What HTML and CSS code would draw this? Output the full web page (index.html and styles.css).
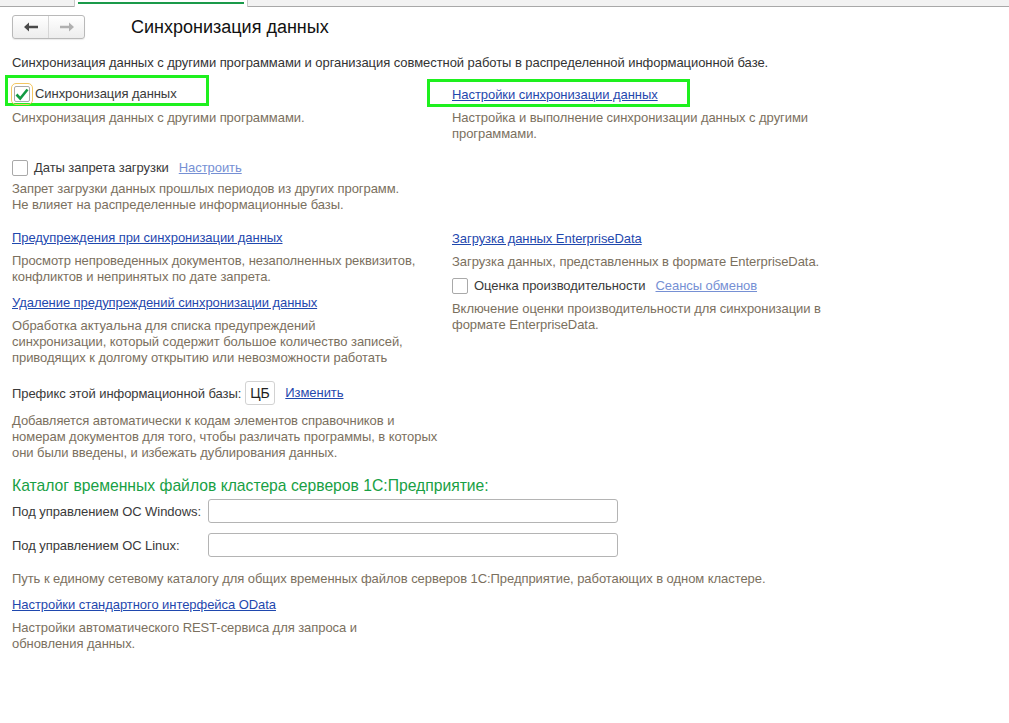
FILE: index.html
```html
<!DOCTYPE html>
<html lang="ru">
<head>
    <meta charset="UTF-8">
    <title>Синхронизация данных</title>
    <link rel="stylesheet" href="styles.css">
</head>
<body>
    <div class="tabs">
        <div class="tab active"></div>
    </div>

    <div class="page">
        <div class="header">
            <div class="nav">
                <span class="nav-btn">
                    <svg width="14" height="10" viewBox="0 0 14 10"><path d="M0 5 L5 0.5 L5 3.8 L14 3.8 L14 6.2 L5 6.2 L5 9.5 Z" fill="#4a4a4a"/></svg>
                </span>
                <span class="nav-btn">
                    <svg width="14" height="10" viewBox="0 0 14 10"><path d="M14 5 L9 0.5 L9 3.8 L0 3.8 L0 6.2 L9 6.2 L9 9.5 Z" fill="#b0b0b0"/></svg>
                </span>
            </div>
            <h1 class="title">Синхронизация данных</h1>
        </div>

        <p class="intro">Синхронизация данных с другими программами и организация совместной работы в распределенной информационной базе.</p>

        <div class="columns">
            <div class="col col-left">
                <div class="marked marked-left">
                    <label class="check">
                        <span class="box checked focus">
                            <svg width="14" height="13" viewBox="0 0 14 13"><path d="M1.5 6.5 L5.2 10.5 L12.5 1.5" fill="none" stroke="#139a43" stroke-width="2.6"/></svg>
                        </span>
                        Синхронизация данных
                    </label>
                </div>
                <p class="note note-first">Синхронизация данных с другими программами.</p>

                <div class="row row-dates">
                    <label class="check"><span class="box"></span>Даты запрета загрузки</label>
                    <a class="link link-light" href="#">Настроить</a>
                </div>
                <p class="note note-dates">Запрет загрузки данных прошлых периодов из других программ.<br>Не влияет на распределенные информационные базы.</p>

                <a class="link item-link link-warn" href="#">Предупреждения при синхронизации данных</a>
                <p class="note">Просмотр непроведенных документов, незаполненных реквизитов,<br>конфликтов и непринятых по дате запрета.</p>

                <a class="link item-link" href="#">Удаление предупреждений синхронизации данных</a>
                <p class="note">Обработка актуальна для списка предупреждений<br>синхронизации, который содержит большое количество записей,<br>приводящих к долгому открытию или невозможности работать</p>
            </div>

            <div class="col col-right">
                <div class="marked marked-right">
                    <a class="link" href="#">Настройки синхронизации данных</a>
                </div>
                <p class="note note-first">Настройка и выполнение синхронизации данных с другими<br>программами.</p>

                <a class="link item-link link-load" href="#">Загрузка данных EnterpriseData</a>
                <p class="note">Загрузка данных, представленных в формате EnterpriseData.</p>

                <div class="row row-perf">
                    <label class="check"><span class="box"></span>Оценка производительности</label>
                    <a class="link link-light" href="#">Сеансы обменов</a>
                </div>
                <p class="note">Включение оценки производительности для синхронизации в<br>формате EnterpriseData.</p>
            </div>
        </div>

        <div class="prefix">
            <span class="label">Префикс этой информационной базы:</span>
            <span class="prefix-value">ЦБ</span>
            <a class="link" href="#">Изменить</a>
        </div>
        <p class="note">Добавляется автоматически к кодам элементов справочников и<br>номерам документов для того, чтобы различать программы, в которых<br>они были введены, и избежать дублирования данных.</p>

        <h2 class="group-title">Каталог временных файлов кластера серверов 1С:Предприятие:</h2>
        <div class="field">
            <span class="field-label">Под управлением ОС Windows:</span>
            <input class="input" type="text">
        </div>
        <div class="field">
            <span class="field-label">Под управлением ОС Linux:</span>
            <input class="input" type="text">
        </div>
        <p class="note note-path">Путь к единому сетевому каталогу для общих временных файлов серверов 1С:Предприятие, работающих в одном кластере.</p>

        <a class="link item-link link-odata" href="#">Настройки стандартного интерфейса OData</a>
        <p class="note">Настройки автоматического REST-сервиса для запроса и<br>обновления данных.</p>
    </div>
</body>
</html>
```

FILE: styles.css
```css
body {
    margin: 0;
    font-family: "Liberation Sans", Arial, sans-serif;
    font-size: 13px;
    letter-spacing: -0.06px;
    color: #333;
    background: #fff;
}

/* верхняя полоса вкладок */
.tabs {
    height: 6px;
    background: #f2f2f2;
    border-bottom: 1px solid #a8a8a8;
    display: flex;
}
.tab {
    margin-left: 74px;
    width: 174px;
    height: 7px;
    background: #fff;
    border-left: 1px solid #c8c8c8;
    border-right: 1px solid #c8c8c8;
    box-sizing: border-box;
    padding: 2px 3px 0;
}
.tab.active::before {
    content: "";
    display: block;
    height: 2px;
    background: #1a9a4a;
}

.page {
    padding: 8px 12px 0;
}

.header {
    display: flex;
    align-items: center;
    height: 24px;
}
.nav {
    display: flex;
    width: 73px;
    height: 24px;
    box-sizing: border-box;
    border: 1px solid #b9b9b9;
    border-radius: 3px;
    background: linear-gradient(#ffffff, #ededed);
    box-shadow: 0 1px 1px rgba(0, 0, 0, 0.08);
}
.nav-btn {
    flex: 1;
    display: flex;
    align-items: center;
    justify-content: center;
}
.nav-btn + .nav-btn {
    border-left: 1px solid #d6d6d6;
}
.title {
    margin: 0 0 0 46px;
    font-size: 18px;
    font-weight: normal;
    letter-spacing: 0;
    color: #111;
}

.intro {
    margin: 16px 0 0;
    line-height: 16px;
}

.columns {
    display: flex;
}
.col {
    display: flex;
    flex-direction: column;
    align-items: flex-start;
}
.col-left {
    width: 440px;
}

.marked {
    border: 3px solid #1ef01e;
    box-sizing: border-box;
    display: flex;
    align-items: center;
}
.marked-left {
    margin: 4px 0 0 -7px;
    width: 204px;
    height: 31px;
    padding: 7px 0 0 4px;
}
.marked-right {
    margin: 8px 0 0 -25px;
    width: 263px;
    height: 28px;
    padding: 3px 0 0 22px;
}

.check {
    display: flex;
    align-items: center;
    color: #3a3a3a;
    line-height: 16px;
}
.box {
    width: 14px;
    height: 14px;
    border: 1px solid #a9a9a9;
    border-radius: 2px;
    background: #fff;
    margin-right: 6px;
    display: flex;
    align-items: center;
    justify-content: center;
}
.box.focus {
    outline: 1px solid #f3c661;
    outline-offset: 2px;
    margin-left: 2px;
    margin-right: 5px;
}

.link {
    color: #1f48ae;
    text-decoration: underline;
    line-height: 16px;
}
.link-light {
    color: #7690d4;
    margin-left: 10px;
}

.note {
    margin: 7px 0 0;
    line-height: 16px;
    color: #7b705e;
}
.note-first {
    margin-top: 3px;
}
.marked-left + .note-first {
    margin-top: 4px;
}
.note-dates {
    margin-top: 5px;
}

.row {
    display: flex;
    align-items: center;
}
.row-dates {
    margin-top: 34px;
}
.row-perf {
    margin-top: 8px;
}

.item-link {
    margin-top: 10px;
}
.link-warn {
    margin-top: 17px;
}
.link-load {
    margin-top: 89px;
}

.prefix {
    display: flex;
    align-items: center;
    margin-top: 15px;
    height: 24px;
}
.label {
    color: #3a3a3a;
}
.prefix-value {
    margin-left: 4px;
    width: 30px;
    height: 24px;
    box-sizing: border-box;
    border: 1px solid #d2d2d2;
    border-radius: 3px;
    padding-left: 4px;
    line-height: 22px;
    font-size: 14px;
    color: #222;
}
.prefix + .note {
    margin-top: 8px;
}
.prefix .link {
    margin-left: 10px;
}

.group-title {
    margin: 15px 0 0;
    font-size: 15.7px;
    font-weight: normal;
    letter-spacing: 0;
    line-height: 20px;
    color: #18a044;
}

.field {
    display: flex;
    align-items: center;
    margin-top: 3px;
}
.field + .field {
    margin-top: 10px;
}
.field-label {
    width: 196px;
    color: #3a3a3a;
}
.input {
    width: 410px;
    height: 24px;
    box-sizing: border-box;
    margin: 0;
    border: 1px solid #b4b4b4;
    border-radius: 3px;
    background: #fff;
}

.note-path {
    margin-top: 14px;
}
.link-odata {
    margin-top: 10px;
    display: inline-block;
}
```
